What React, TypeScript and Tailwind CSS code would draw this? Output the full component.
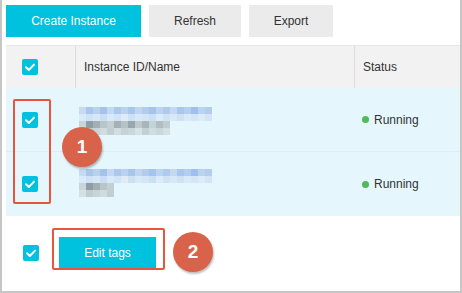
import React from "react"

const font = { fontFamily: '"Liberation Sans", Arial, sans-serif' }

const blue1 = ["#c6daf1", "#a9c7ec", "#b7d1ef", "#a3c3ea", "#c3d8f1", "#abc9ec", "#b9d2ef", "#a7c6eb", "#c0d6f0", "#b1ccee", "#a5c4eb", "#bcd4f0", "#aecbed", "#c4d9f1", "#a8c7ec", "#b4cfee", "#9fc0ea", "#bad3ef", "#b2cdee"]
const blue2 = ["#dbeaf8", "#cfe2f5", "#d6e7f7", "#c9def4", "#d9e9f7", "#d1e3f6", "#dfecf8", "#cde1f5", "#d7e8f7", "#d3e5f6", "#cbe0f5", "#dcebf8", "#d0e3f6", "#d8e8f7", "#cee2f5", "#dae9f8", "#d4e5f6", "#ddebf8", "#d2e4f6"]
const gray1 = ["#c9d6d9", "#8f9ea5", "#a2b0b4", "#b8c6c9", "#c3d0d3", "#a4b2b5", "#b5c3c6", "#99a8ad", "#bccacd", "#a8b6b9", "#c6d3d6", "#b0bec1", "#c0cdd0"]
const gray2 = ["#d4e0e3", "#bfcdd0", "#c8d5d8", "#cfdbde", "#c2cfd2", "#d1dde0", "#c6d3d6", "#cbd8db", "#d6e2e5", "#c4d1d4", "#d0dcdf", "#cad7da", "#d3dfe2"]

function Mosaic({ gray }: { gray: number }) {
  const rows = [blue1, blue2, gray1.slice(0, gray), gray2.slice(0, gray)]
  return (
    <div className="flex flex-col">
      {rows.map((row, i) => (
        <div key={i} className="flex h-[7px]">
          {row.map((c, j) => (
            <div key={j} className="w-[7px] h-[7px]" style={{ backgroundColor: c }} />
          ))}
        </div>
      ))}
    </div>
  )
}

function Check() {
  return (
    <div className="w-4 h-4 rounded-[2px] bg-[#00c1de] flex items-center justify-center">
      <svg viewBox="0 0 16 16" className="w-4 h-4">
        <path d="M4 8.3 L6.8 11 L12 5.6" fill="none" stroke="#fff" strokeWidth="2" strokeLinecap="round" strokeLinejoin="round" />
      </svg>
    </div>
  )
}

function Running() {
  return (
    <div className="flex items-center gap-[5px] text-[12px] text-[#333]">
      <span className="w-[7px] h-[7px] rounded-full bg-[#52b85a]" />
      Running
    </div>
  )
}

function Badge({ n, className }: { n: string; className: string }) {
  return (
    <div
      className={
        "absolute w-10 h-10 rounded-full bg-[#d9634a] text-white font-bold text-[19px] flex items-center justify-center shadow-[1px_2px_2px_rgba(0,0,0,0.25)] " +
        className
      }
    >
      {n}
    </div>
  )
}

export default function App() {
  return (
    <div style={font} className="relative w-[462px] h-[293px] bg-white border-x-2 border-b-2 border-[#c6c6c6] pl-1 pt-[5px] overflow-hidden">
      <div className="flex gap-2 text-[12px]">
        <button className="w-[135px] h-8 bg-[#00c1de] text-white">Create Instance</button>
        <button className="w-[92px] h-8 bg-[#ebebeb] text-[#333]">Refresh</button>
        <button className="w-[84px] h-8 bg-[#ebebeb] text-[#333]">Export</button>
      </div>

      <div className="mt-2 border-t border-[#e6e6e6]">
        <div className="flex h-[42px] bg-[#f2f2f2] text-[12px] text-[#333]">
          <div className="w-[70px] border-r border-[#dcdcdc] flex items-center pl-4">
            <Check />
          </div>
          <div className="w-[279px] border-r border-[#dcdcdc] flex items-center pl-2">Instance ID/Name</div>
          <div className="flex-1 flex items-center pl-2">Status</div>
        </div>

        <div className="flex h-16 bg-[#e5f7fd] border-b border-[#d9eef6]">
          <div className="w-[70px] flex items-center pl-4">
            <Check />
          </div>
          <div className="w-[279px] pl-[3px] pt-[19px]">
            <Mosaic gray={13} />
          </div>
          <div className="flex-1 flex items-center pl-[7px]">
            <Running />
          </div>
        </div>

        <div className="flex h-16 bg-[#e5f7fd]">
          <div className="w-[70px] flex items-center pl-4">
            <Check />
          </div>
          <div className="w-[279px] pl-[3px] pt-[17px]">
            <Mosaic gray={5} />
          </div>
          <div className="flex-1 flex items-center pl-[7px]">
            <Running />
          </div>
        </div>

        <div className="flex items-center h-[75px] pb-[2px]">
          <div className="w-[53px] pl-[17px]">
            <Check />
          </div>
          <button className="w-[97px] h-[31px] bg-[#00c1de] text-white text-[12px]">Edit tags</button>
        </div>
      </div>

      <div className="absolute left-[11px] top-[99px] w-[38px] h-[105px] border-2 border-[#e9553a] rounded-[2px]" />
      <div className="absolute left-[50px] top-[228px] w-[113px] h-[42px] border-2 border-[#e9553a] rounded-[2px]" />
      <Badge n="1" className="left-[60px] top-[127px]" />
      <Badge n="2" className="left-[171px] top-[232px]" />
    </div>
  )
}
